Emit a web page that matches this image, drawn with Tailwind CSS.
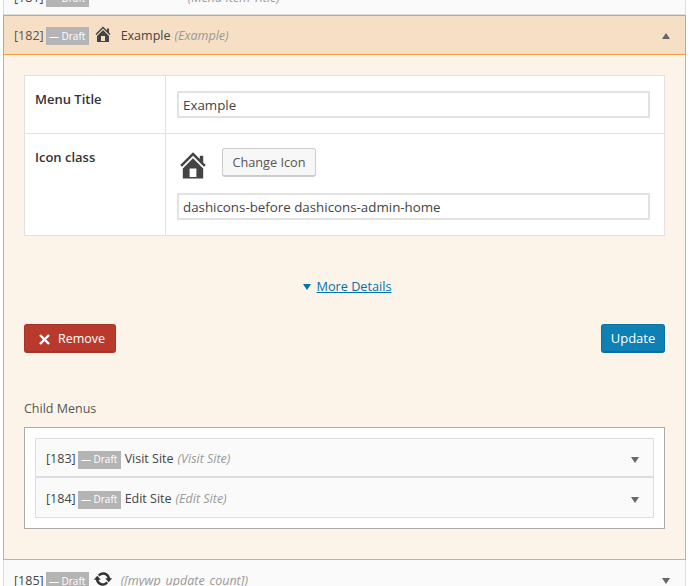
<!DOCTYPE html>
<html lang="en">
<head>
    <meta charset="utf-8">
    <meta name="viewport" content="width=device-width, initial-scale=1.0">
    <title>Menu Items</title>
    <script src="https://cdn.jsdelivr.net/npm/@tailwindcss/browser@4"></script>
</head>
<body class="bg-white font-['Open_Sans',sans-serif] text-[12.5px] text-[#444] h-[586px] overflow-hidden">

<div class="ml-[3px] w-[683px]">
    <!-- previous item, cut off by the top of the window -->
    <div class="h-[15px] overflow-hidden bg-[#fafafa] border-x border-b border-[#ddd] flex flex-col justify-end">
        <div class="h-[40px] shrink-0 -mb-[4px] flex items-center pl-[10px]">
            <span>[181]</span>
            <span class="bg-[#b4b4b4] text-white text-[10px] h-[18px] w-[43px] ml-[2px] flex items-center justify-center">— Draft</span>
            <span class="ml-[99px] italic text-[#999]">(Menu Item Title)</span>
        </div>
    </div>

    <!-- open item -->
    <div class="h-[40px] bg-[#f6dfc5] border border-[#f49b3f] flex items-center pl-[10px] pr-[15px] pt-[2px]">
        <span class="text-[#555]">[182]</span>
        <span class="bg-[#b4b4b4] text-white text-[10px] h-[18px] w-[43px] ml-[2px] flex items-center justify-center">— Draft</span>
        <svg class="w-[20px] h-[20px] ml-[4px] -mt-[4px] text-[#444]" viewBox="0 0 20 20" fill="currentColor"><path d="M16 8.5l1.53 1.53-1.06 1.06L10 4.62l-6.47 6.47-1.06-1.06L10 2.5l4 4v-2h2v4zm-6-2.46l6 5.99V18H4v-5.97zM12 17v-5H8v5h4z"/></svg>
        <span class="ml-[8px]">Example</span>
        <span class="ml-[4px] italic text-[#999]">(Example)</span>
        <span class="ml-auto w-0 h-0 border-x-[4px] border-x-transparent border-b-[6px] border-b-[#666]"></span>
    </div>

    <div class="h-[505px] bg-[#fdf4e9] border-x border-b border-[#e9a76b] px-[20px] pt-[20px]">
        <!-- settings table -->
        <div class="w-[641px] bg-white border border-[#e1e1e1] grid grid-cols-[141px_1fr]">
            <div class="h-[58px] border-r border-b border-[#e1e1e1] pl-[10px] pt-[14px] text-[13px] font-semibold leading-[18px] text-[#333]">Menu Title</div>
            <div class="h-[58px] border-b border-[#e1e1e1] pl-[11px] pr-[14px] pt-[15px]">
                <input type="text" value="Example" class="w-[473px] h-[27px] border-2 border-[#e2e2e2] bg-white px-[4px] text-[13.33px] text-[#444] outline-none">
            </div>
            <div class="h-[101px] border-r border-[#e1e1e1] pl-[10px] pt-[14px] text-[13px] font-semibold leading-[18px] text-[#333]">Icon class</div>
            <div class="h-[101px] pl-[11px] pr-[14px] pt-[14px]">
                <div class="flex items-center h-[29px]">
                    <svg class="w-[34px] h-[34px] ml-[-1px] mt-[5px] shrink-0 text-[#444]" viewBox="0 0 20 20" fill="currentColor"><path d="M16 8.5l1.53 1.53-1.06 1.06L10 4.62l-6.47 6.47-1.06-1.06L10 2.5l4 4v-2h2v4zm-6-2.46l6 5.99V18H4v-5.97zM12 17v-5H8v5h4z"/></svg>
                    <button class="ml-[12px] w-[94px] h-[29px] pt-[1px] bg-[#f7f7f7] border border-[#ccc] border-b-2 rounded-[3px] text-[#555] text-[12.7px]">Change Icon</button>
                </div>
                <input type="text" value="dashicons-before dashicons-admin-home" class="mt-[16px] w-[473px] h-[27px] border-2 border-[#e2e2e2] bg-white px-[4px] text-[13.33px] text-[#444] outline-none">
            </div>
        </div>

        <!-- more details -->
        <div class="mt-[42px] h-[18px] flex items-center justify-center gap-[5px] text-[#0073aa] pl-[6px]">
            <span class="w-0 h-0 border-x-[4px] border-x-transparent border-t-[6px] border-t-[#0073aa]"></span>
            <a href="#" class="underline text-[12.7px]">More Details</a>
        </div>

        <!-- actions -->
        <div class="mt-[28px] w-[641px] flex justify-between">
            <button class="w-[92px] h-[29px] pt-[3px] bg-[#b93a2d] border border-[#a5352a] border-b-2 rounded-[3px] text-white text-[12.5px] flex items-center pl-[14px] gap-[8px]">
                <svg class="w-[11px] h-[11px]" viewBox="0 0 11 11" fill="none" stroke="white" stroke-width="2.4"><path d="M1 1l9 9M10 1l-9 9"/></svg>
                Remove
            </button>
            <button class="w-[64px] h-[29px] pt-[1px] bg-[#0e80b4] border border-[#0b6f9f] border-b-2 rounded-[3px] text-white text-[13px]">Update</button>
        </div>

        <!-- child menus -->
        <div class="mt-[47px] h-[18px] leading-[18px] text-[#555]">Child Menus</div>
        <div class="mt-[9px] w-[641px] h-[102px] bg-white border border-[#aaa] p-[10px]">
            <div class="h-[40px] bg-[#fafafa] border border-[#ddd] border-b-2 flex items-center pl-[10px] pr-[14px] pt-[4px]">
                <span>[183]</span>
                <span class="bg-[#b4b4b4] text-white text-[10px] h-[18px] w-[43px] ml-[2px] flex items-center justify-center">— Draft</span>
                <span class="ml-[4px]">Visit Site</span>
                <span class="ml-[4px] italic text-[#999]">(Visit Site)</span>
                <span class="ml-auto w-0 h-0 border-x-[4px] border-x-transparent border-t-[6px] border-t-[#666]"></span>
            </div>
            <div class="h-[40px] bg-[#fafafa] border-x border-b border-[#ddd] flex items-center pl-[10px] pr-[14px] pt-[4px]">
                <span>[184]</span>
                <span class="bg-[#b4b4b4] text-white text-[10px] h-[18px] w-[43px] ml-[2px] flex items-center justify-center">— Draft</span>
                <span class="ml-[4px]">Edit Site</span>
                <span class="ml-[4px] italic text-[#999]">(Edit Site)</span>
                <span class="ml-auto w-0 h-0 border-x-[4px] border-x-transparent border-t-[6px] border-t-[#666]"></span>
            </div>
        </div>
    </div>

    <!-- next item -->
    <div class="h-[40px] bg-[#fafafa] border-x border-[#ddd] flex items-center pl-[10px] pr-[15px] pt-[2px]">
        <span>[185]</span>
        <span class="bg-[#b4b4b4] text-white text-[10px] h-[18px] w-[43px] ml-[2px] flex items-center justify-center">— Draft</span>
        <svg class="w-[20px] h-[20px] ml-[4px] -mt-[4px] text-[#333]" viewBox="0 0 20 20" fill="currentColor"><path d="M10.2 3.28c3.53 0 6.43 2.61 6.92 6h2.08l-3.5 4-3.5-4h2.32c-.45-1.97-2.21-3.45-4.32-3.45-1.45 0-2.73.71-3.54 1.78L4.95 5.66C6.23 4.2 8.11 3.28 10.2 3.28zm-.4 13.44c-3.52 0-6.43-2.61-6.92-6H.8l3.5-4c1.17 1.33 2.33 2.67 3.5 4H5.48c.45 1.97 2.21 3.45 4.32 3.45 1.45 0 2.73-.71 3.54-1.78l1.71 1.95c-1.28 1.46-3.15 2.38-5.25 2.38z"/></svg>
        <span class="ml-[8px] italic text-[#999]">([mywp_update_count])</span>
        <span class="ml-auto w-0 h-0 border-x-[4px] border-x-transparent border-t-[6px] border-t-[#666]"></span>
    </div>
</div>

</body>
</html>
